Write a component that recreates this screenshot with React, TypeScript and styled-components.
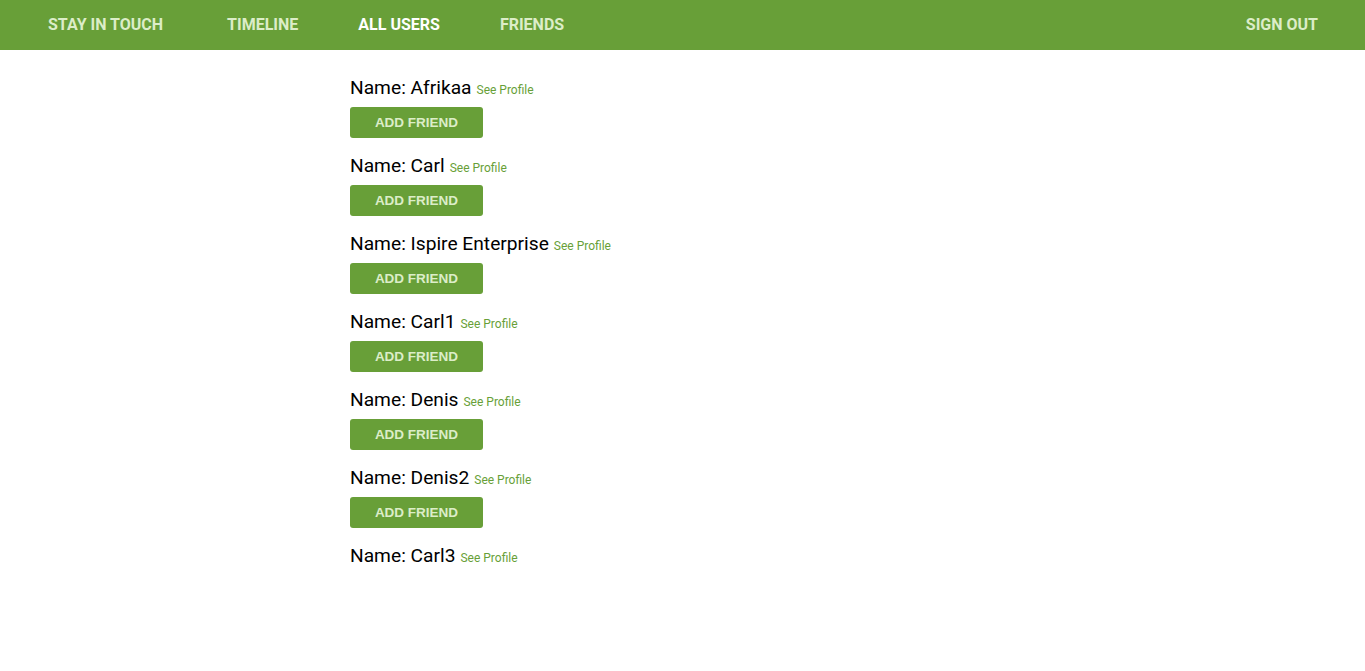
import React from "react";
import styled, { createGlobalStyle } from "styled-components";

const Global = createGlobalStyle`
  body { margin: 0; font-family: Roboto, "Liberation Sans", sans-serif; background: #fff; }
`;

const Nav = styled.nav`
  height: 50px;
  box-sizing: border-box;
  padding: 0 17px 2px 18px;
  background: #689f38;
  display: flex;
  align-items: center;
`;

const NavLinks = styled.div`
  display: flex;
  flex: 1;
`;

const NavLink = styled.a<{ $active?: boolean; $brand?: boolean }>`
  font-family: Roboto, sans-serif;
  font-weight: 700;
  font-size: 16px;
  padding: 0 30px;
  margin-right: ${(p) => (p.$brand ? "4px" : "0")};
  color: ${(p) => (p.$active ? "#ffffff" : "#dcedc8")};
  text-decoration: none;
  cursor: pointer;
`;

const Main = styled.main`
  padding: 26px 0 0 350px;
  display: flex;
  flex-direction: column;
`;

const UserRow = styled.div`
  display: flex;
  flex-direction: column;
  align-items: flex-start;
  height: 78px;
`;

const NameLine = styled.p`
  margin: 0;
  font-family: Roboto, sans-serif;
  font-size: 19.2px;
  line-height: 24px;
  color: #000;
`;

const ProfileLink = styled.a`
  font-size: 12px;
  color: #689f38;
  text-decoration: none;
  margin-left: 5px;
  cursor: pointer;
`;

const AddButton = styled.button`
  margin-top: 5px;
  width: 133px;
  height: 31px;
  padding: 0;
  border: none;
  border-radius: 3px;
  background: #689f38;
  color: #dcedc8;
  font-family: "Liberation Sans", Arial, sans-serif;
  font-weight: 700;
  font-size: 13.5px;
  cursor: pointer;
`;

const users = [
  { name: "Afrikaa", add: true },
  { name: "Carl", add: true },
  { name: "Ispire Enterprise", add: true },
  { name: "Carl1", add: true },
  { name: "Denis", add: true },
  { name: "Denis2", add: true },
  { name: "Carl3", add: false },
];

export default function App() {
  return (
    <>
      <Global />
      <Nav>
        <NavLinks>
          <NavLink $brand>STAY IN TOUCH</NavLink>
          <NavLink>TIMELINE</NavLink>
          <NavLink $active>ALL USERS</NavLink>
          <NavLink>FRIENDS</NavLink>
        </NavLinks>
        <NavLink>SIGN OUT</NavLink>
      </Nav>
      <Main>
        {users.map((u) => (
          <UserRow key={u.name}>
            <NameLine>
              Name: {u.name}
              <ProfileLink>See Profile</ProfileLink>
            </NameLine>
            {u.add && <AddButton>ADD FRIEND</AddButton>}
          </UserRow>
        ))}
      </Main>
    </>
  );
}
